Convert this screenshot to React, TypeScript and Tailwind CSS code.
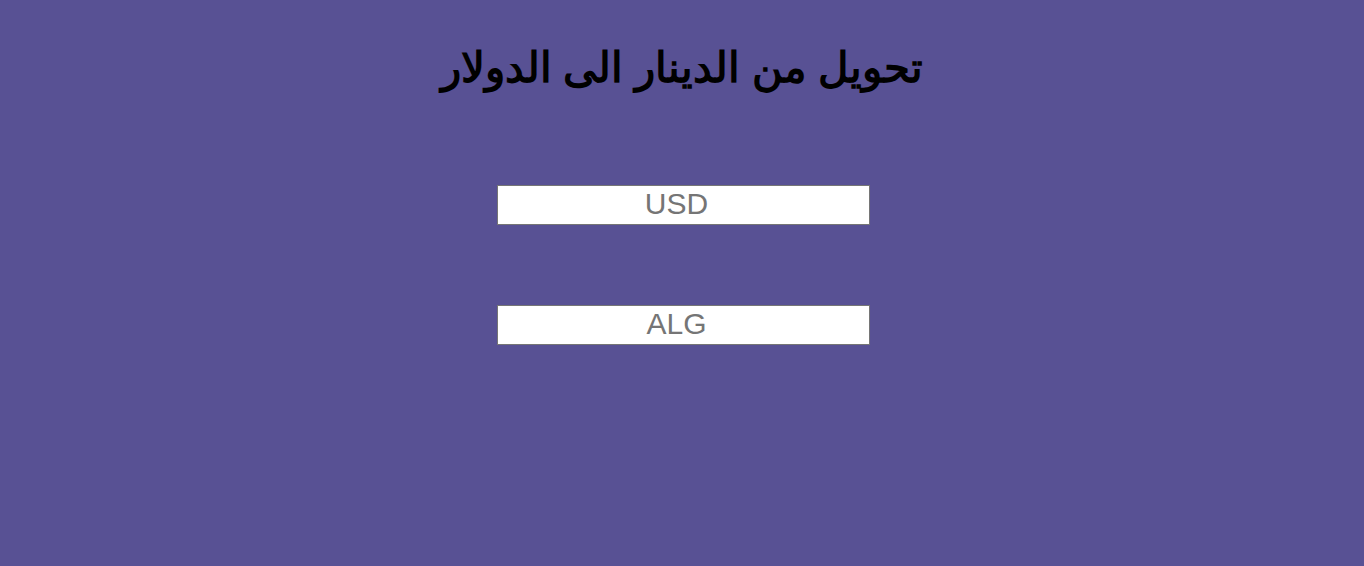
import React from 'react';

// Simple DZD <-> USD converter page (static mock, no conversion logic wired here)

export default function App() {
  return (
    <div className="min-h-[566px] w-full bg-[#585194] font-['Liberation_Sans',Arial,sans-serif]">
      <h1
        dir="rtl"
        className="pt-[36px] text-center text-[42px] font-bold leading-[64px] text-black"
      >
        تحويل من الدينار الى الدولار
      </h1>
      <div className="mt-[85px] flex flex-col items-center gap-[80px]">
        <input
          type="text"
          placeholder="USD"
          className="ml-[3px] h-[40px] w-[373px] border border-[#767676] bg-white pb-[3px] pr-[14px] text-center text-[30px] text-black outline-none placeholder:text-[#757575]"
        />
        <input
          type="text"
          placeholder="ALG"
          className="ml-[3px] h-[40px] w-[373px] border border-[#767676] bg-white pb-[3px] pr-[14px] text-center text-[30px] text-black outline-none placeholder:text-[#757575]"
        />
      </div>
    </div>
  );
}
